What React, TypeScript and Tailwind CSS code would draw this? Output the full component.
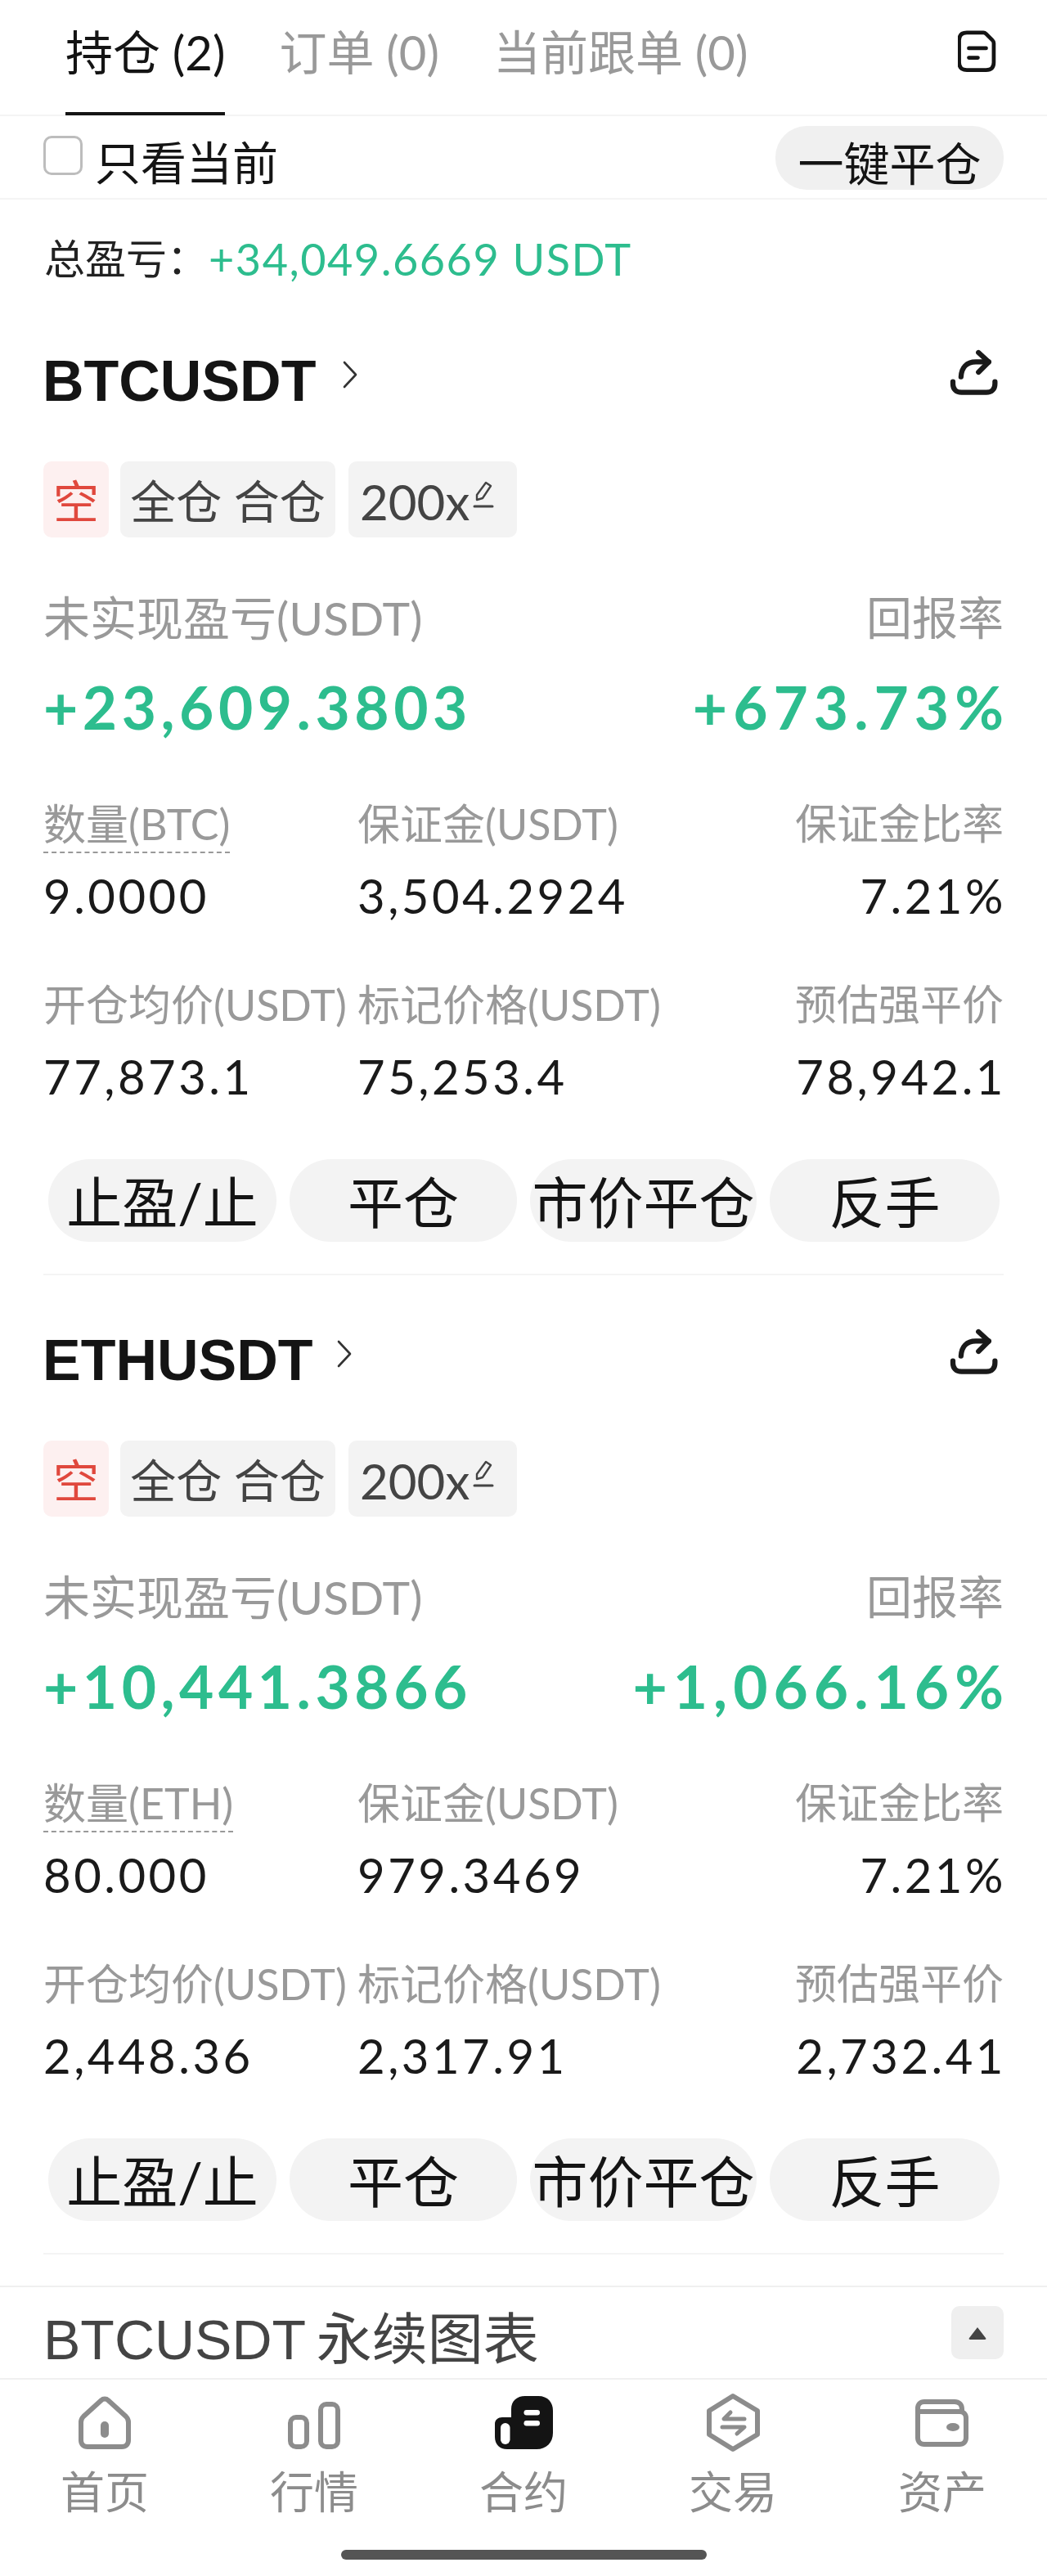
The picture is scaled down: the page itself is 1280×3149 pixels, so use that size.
const green = 'text-[#2dbd8e]'

type Position = {
  symbol: string
  base: string
  pnl: string
  roe: string
  size: string
  margin: string
  entry: string
  mark: string
  liq: string
  chevron: string
}

const positions: Position[] = [
  { symbol: 'BTCUSDT', base: 'BTC', pnl: '+23,609.3803', roe: '+673.73%', size: '9.0000', margin: '3,504.2924', entry: '77,873.1', mark: '75,253.4', liq: '78,942.1', chevron: 'ml-[32px]' },
  { symbol: 'ETHUSDT', base: 'ETH', pnl: '+10,441.3866', roe: '+1,066.16%', size: '80.000', margin: '979.3469', entry: '2,448.36', mark: '2,317.91', liq: '2,732.41', chevron: 'ml-[28px]' },
]

function Label({ children, right }: { children: React.ReactNode; right?: boolean }) {
  return <div className={`h-[60px] leading-[60px] text-[#999] whitespace-nowrap ${right ? 'text-right text-[51px]' : 'text-[52px]'}`}>{children}</div>
}

function Value({ children, right }: { children: React.ReactNode; right?: boolean }) {
  return <div className={`h-[60px] text-[58px] leading-[60px] tracking-[3.5px] text-[#1a1a1a] whitespace-nowrap ${right ? '-mr-[3px] text-right' : ''}`}>{children}</div>
}

function ShareIcon() {
  return (
    <svg width="60" height="56" viewBox="90 58 180 170" fill="none" stroke="#1a1a1a" strokeWidth="19" strokeLinecap="round" strokeLinejoin="round">
      <path d="M101 178v8c0 20 12 32 32 32h92c20 0 32-12 32-32v-8" />
      <path d="M131 160c2-34 20-55 55-55h48" />
      <path d="M196 70l38 35-38 38" />
    </svg>
  )
}

function PencilIcon() {
  return (
    <svg width="26" height="34" viewBox="0 0 26 34" fill="none" stroke="#444" strokeWidth="2.4" strokeLinejoin="round" strokeLinecap="round">
      <path d="M5 17L16 2l6 4-10 15-7 2z" />
      <path d="M2 31h22" strokeWidth="3" />
    </svg>
  )
}

function PositionCard({ p }: { p: Position }) {
  return (
    <section className="h-[1197px] px-[53px]">
      <div className="flex h-[156px] items-center justify-between">
        <div className="flex items-center">
          <span className="-ml-[1px] font-['Liberation_Sans','Noto_Sans_CJK_SC',sans-serif] text-[70px] leading-none font-bold text-[#141414]">{p.symbol}</span>
          <svg className={`${p.chevron} mb-[16px]`} width="20" height="34" viewBox="0 0 20 34" fill="none" stroke="#333" strokeWidth="2.6" strokeLinecap="round" strokeLinejoin="round">
            <path d="M3 2l14 15L3 32" />
          </svg>
        </div>
        <div className="mb-[22px] mr-[6px]"><ShareIcon /></div>
      </div>
      <div className="mt-[20px] flex h-[93px] gap-[14px] text-[56px] leading-[97px] text-[#444]">
        <span className="w-[80px] rounded-[10px] bg-[#fdf0f0] text-center text-[#e0483d]">空</span>
        <span className="w-[263px] rounded-[10px] bg-[#f3f3f3] text-center">全仓 合仓</span>
        <span className="ml-[2px] flex w-[206px] items-center rounded-[10px] bg-[#f3f3f3] pl-[14px] pt-[6px] text-[60px]">200x<span className="ml-[4px] mb-[18px]"><PencilIcon /></span></span>
      </div>

      <div className="mt-[68px] flex justify-between text-[57px] leading-[60px] text-[#999]">
        <span>未实现盈亏(USDT)</span>
        <span className="text-[56px]">回报率</span>
      </div>
      <div className={`mt-[39px] flex h-[80px] justify-between text-[73px] leading-[80px] font-bold tracking-[5.5px] ${green}`}>
        <span>{p.pnl}</span>
        <span className="-mr-[7px] tracking-[7px]">{p.roe}</span>
      </div>

      <div className="mt-[73px] grid grid-cols-[384px_1fr_auto]">
        <Label><span className="inline-block h-[66px] border-b-2 border-dashed border-[#999]">数量({p.base})</span></Label>
        <Label>保证金(USDT)</Label>
        <Label right>保证金比率</Label>
      </div>
      <div className="mt-[28px] grid grid-cols-[384px_1fr_auto]">
        <Value>{p.size}</Value>
        <Value>{p.margin}</Value>
        <Value right>7.21%</Value>
      </div>
      <div className="mt-[73px] grid grid-cols-[384px_1fr_auto]">
        <Label>开仓均价(USDT)</Label>
        <Label>标记价格(USDT)</Label>
        <Label right>预估强平价</Label>
      </div>
      <div className="mt-[28px] grid grid-cols-[384px_1fr_auto]">
        <Value>{p.entry}</Value>
        <Value>{p.mark}</Value>
        <Value right>{p.liq}</Value>
      </div>

      <div className="mt-[71px] ml-[6px] flex h-[101px] w-[1163px] justify-between text-[68px] leading-[105px] text-[#141414]">
        <span className="w-[279px] rounded-full bg-[#f3f3f3] text-center whitespace-nowrap">止盈/止</span>
        <span className="w-[278px] rounded-full bg-[#f3f3f3] text-center">平仓</span>
        <span className="w-[277px] rounded-full bg-[#f3f3f3] text-center whitespace-nowrap">市价平仓</span>
        <span className="w-[281px] rounded-full bg-[#f3f3f3] text-center">反手</span>
      </div>
      <div className="mt-[39px] border-b-2 border-[#f4f4f4]" />
    </section>
  )
}

const navItems = [
  {
    label: '首页',
    icon: (
      <g fill="none" stroke="#8c8c8c" strokeWidth="6" strokeLinejoin="round">
        <path d="M32 11L10 31c-2 2-3 4-3 7v22c0 5 3 8 8 8h42c5 0 8-3 8-8V38c0-3-1-5-3-7L40 11c-2-2-6-2-8 0z" />
        <rect x="31" y="37" width="10" height="20" rx="5" fill="#8c8c8c" stroke="none" />
      </g>
    ),
  },
  {
    label: '行情',
    icon: (
      <g fill="none" stroke="#8c8c8c" strokeWidth="6">
        <rect x="7" y="32" width="20" height="36" rx="7" />
        <rect x="44" y="16" width="21" height="52" rx="7" />
      </g>
    ),
  },
  {
    label: '合约',
    icon: (
      <g>
        <path d="M21 32V22C21 12 28 6 38 6h16c12 0 18 8 18 18v27c0 12-8 20-20 20H16C7 71 1 65 1 56V40c0-5 4-8 9-8z" fill="#141414" />
        <rect x="8" y="39" width="11.5" height="26" rx="5.75" fill="#fff" />
        <rect x="36.5" y="23" width="19.5" height="6.5" rx="3.2" fill="#fff" />
        <rect x="36.5" y="36" width="19.5" height="6.5" rx="3.2" fill="#fff" />
      </g>
    ),
  },
  {
    label: '交易',
    icon: (
      <g fill="none" stroke="#8c8c8c" strokeWidth="6" strokeLinejoin="round" strokeLinecap="round">
        <path d="M36 6l30 18v29L36 71 7 53V24z" />
        <path d="M33 26l-8 8h25M23 44h27l-9 8" strokeWidth="5" />
      </g>
    ),
  },
  {
    label: '资产',
    icon: (
      <g fill="none" stroke="#8c8c8c" strokeWidth="6" strokeLinejoin="round">
        <path d="M6 25v-4c0-5 3-8 8-8h37c5 0 9 3 9 9v3" />
        <path d="M6 22v35c0 5 3 8 8 8h43c5 0 8-3 8-8V33c0-5-3-8-8-8H6" />
        <ellipse cx="49" cy="44" rx="8" ry="5" fill="#8c8c8c" stroke="none" />
      </g>
    ),
  },
]

export default function App() {
  return (
    <div className="h-[3149px] w-[1280px] overflow-hidden bg-white font-['Lato','Noto_Sans_CJK_SC',sans-serif] text-[#141414]">
      <header className="flex h-[142px] items-stretch justify-between border-b-2 border-[#f4f4f4] pl-[80px] pr-[61px]">
        <div className="flex gap-[66px] text-[58px] text-[#999]">
          <div className="flex h-[141px] items-center border-b-[4px] border-[#141414] pb-[10px] text-[#141414]">持仓 (2)</div>
          <div className="flex h-[141px] items-center pb-[14px]">订单 (0)</div>
          <div className="flex h-[141px] items-center pb-[14px]">当前跟单 (0)</div>
        </div>
        <svg className="mt-[36px]" width="48" height="54" viewBox="210 73 153 172" fill="none" stroke="#141414" strokeWidth="15" strokeLinecap="round" strokeLinejoin="round">
          <path d="M245 85h65c5 0 7 2 10 5l24 24c4 4 6 7 6 12v75c0 20-10 30-30 30h-75c-20 0-30-10-30-30v-86c0-20 10-30 30-30z" />
          <path d="M253 146h67M253 183h35" />
        </svg>
      </header>

      <div className="flex h-[102px] items-center justify-between border-b-2 border-[#f4f4f4] pl-[53px] pr-[53px]">
        <div className="flex items-center">
          <span className="mb-[4px] h-[48px] w-[48px] rounded-[10px] border-[3px] border-[#bdbdbd]" />
          <span className="ml-[15px] mt-[14px] text-[56px] leading-none">只看当前</span>
        </div>
        <span className="mt-[2px] h-[78px] w-[279px] rounded-[38px] bg-[#f0f0f0] text-center text-[56px] leading-[92px]">一键平仓</span>
      </div>

      <div className="flex h-[144px] items-center pl-[54px] text-[50px]">
        <span className="w-[201px] text-[#222]">总盈亏：</span>
        <span className={`text-[54px] tracking-[1.5px] ${green}`}>+34,049.6669 USDT</span>
      </div>

      {positions.map(p => (
        <PositionCard key={p.symbol} p={p} />
      ))}

      <div className="mt-[12px] flex h-[115px] items-center justify-between border-y-2 border-[#f0f0f0] pl-[53px] pr-[53px]">
        <span className="pt-[16px] font-['Liberation_Sans','Noto_Sans_CJK_SC',sans-serif] text-[68px] [word-spacing:-5px] text-[#444]">BTCUSDT 永续图表</span>
        <span className="flex h-[65px] w-[64px] items-center justify-center rounded-[10px] bg-[#efefef]">
          <svg width="24" height="16" viewBox="0 0 24 16"><path d="M12 1l10 13c1 1 0 2-1 2H3c-1 0-2-1-1-2z" fill="#444" /></svg>
        </span>
      </div>

      <nav className="grid grid-cols-5 pt-[14px]">
        {navItems.map(item => (
          <div key={item.label} className="flex flex-col items-center">
            <svg width="72" height="76" viewBox="0 0 72 76">{item.icon}</svg>
            <span className="mt-[16px] text-[54px] leading-[64px] text-[#8c8c8c]">{item.label}</span>
          </div>
        ))}
      </nav>

      <div className="mx-auto mt-[38px] h-[12px] w-[447px] rounded-full bg-[#555]" />
    </div>
  )
}
